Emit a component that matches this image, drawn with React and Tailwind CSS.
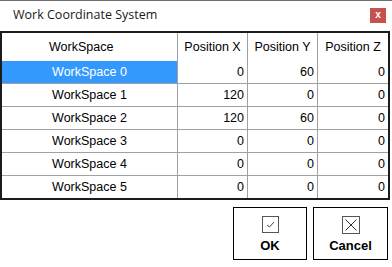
import React from "react";

const rows = [
  { name: "WorkSpace 0", x: 0, y: 60, z: 0 },
  { name: "WorkSpace 1", x: 120, y: 0, z: 0 },
  { name: "WorkSpace 2", x: 120, y: 60, z: 0 },
  { name: "WorkSpace 3", x: 0, y: 0, z: 0 },
  { name: "WorkSpace 4", x: 0, y: 0, z: 0 },
  { name: "WorkSpace 5", x: 0, y: 0, z: 0 },
];

function CheckIcon() {
  return (
    <svg width="17" height="17" viewBox="0 0 17 17">
      <rect x="0.5" y="0.5" width="16" height="16" fill="white" stroke="#555" />
      <path d="M5 9 L7.5 11 L12 6" fill="none" stroke="#444" strokeWidth="1" />
    </svg>
  );
}

function CrossIcon() {
  return (
    <svg width="18" height="18" viewBox="0 0 18 18">
      <rect x="0.5" y="0.5" width="17" height="17" fill="white" stroke="#555" />
      <path d="M3.5 3.5 L14.5 14.5 M14.5 3.5 L3.5 14.5" fill="none" stroke="#333" strokeWidth="1" />
    </svg>
  );
}

export default function App() {
  return (
    <div className="w-[392px] h-[267px] bg-white border-t border-[#6e6e6e] font-['Liberation_Sans',Arial,sans-serif] text-black overflow-hidden">
      {/* title bar */}
      <div className="h-[30px] flex items-center justify-between pl-[13px] pr-[6px]">
        <span className="text-[12.5px] text-[#1a1a1a] font-['Open_Sans','Liberation_Sans',sans-serif] leading-none -mt-[1px]">
          Work Coordinate System
        </span>
        <div className="w-[16px] h-[15px] bg-[#c75050] flex items-center justify-center text-white text-[10px] font-bold leading-none -mt-[2px]">
          x
        </div>
      </div>

      {/* grid */}
      <div className="w-[390px] border-2 border-[#1c1c1c] text-[12.5px]">
        <div className="grid grid-cols-[176px_70px_70px_70px] h-[28px]">
          <div className="flex items-center pl-[47px] border-r border-[#a0a0a0]">WorkSpace</div>
          <div className="flex items-center justify-center border-r border-[#a0a0a0]">Position X</div>
          <div className="flex items-center justify-center border-r border-[#a0a0a0]">Position Y</div>
          <div className="flex items-center justify-center">Position Z</div>
        </div>
        {rows.map((r, i) => (
          <div key={r.name} className="grid grid-cols-[176px_70px_70px_70px] h-[23px] border-b border-[#a0a0a0] last:border-b-0 last:h-[22px]">
            <div
              className={
                i === 0
                  ? "flex items-center justify-center bg-[#3399ff] text-white border-r border-[#a0a0a0]"
                  : "flex items-center justify-center border-r border-[#a0a0a0]"
              }
            >
              {r.name}
            </div>
            <div className="flex items-center justify-end pr-[3px] border-r border-[#a0a0a0]">{r.x}</div>
            <div className="flex items-center justify-end pr-[3px] border-r border-[#a0a0a0]">{r.y}</div>
            <div className="flex items-center justify-end pr-[3px]">{r.z}</div>
          </div>
        ))}
      </div>

      {/* buttons */}
      <div className="flex justify-end gap-[6px] pr-[4px] mt-[7px]">
        <button className="w-[74px] h-[53px] border border-black bg-white flex flex-col items-center pt-[8px] gap-[6px]">
          <CheckIcon />
          <span className="text-[13px] font-bold leading-none">OK</span>
        </button>
        <button className="w-[75px] h-[53px] border border-black bg-white flex flex-col items-center pt-[8px] gap-[5px]">
          <CrossIcon />
          <span className="text-[13px] font-bold leading-none">Cancel</span>
        </button>
      </div>
    </div>
  );
}
